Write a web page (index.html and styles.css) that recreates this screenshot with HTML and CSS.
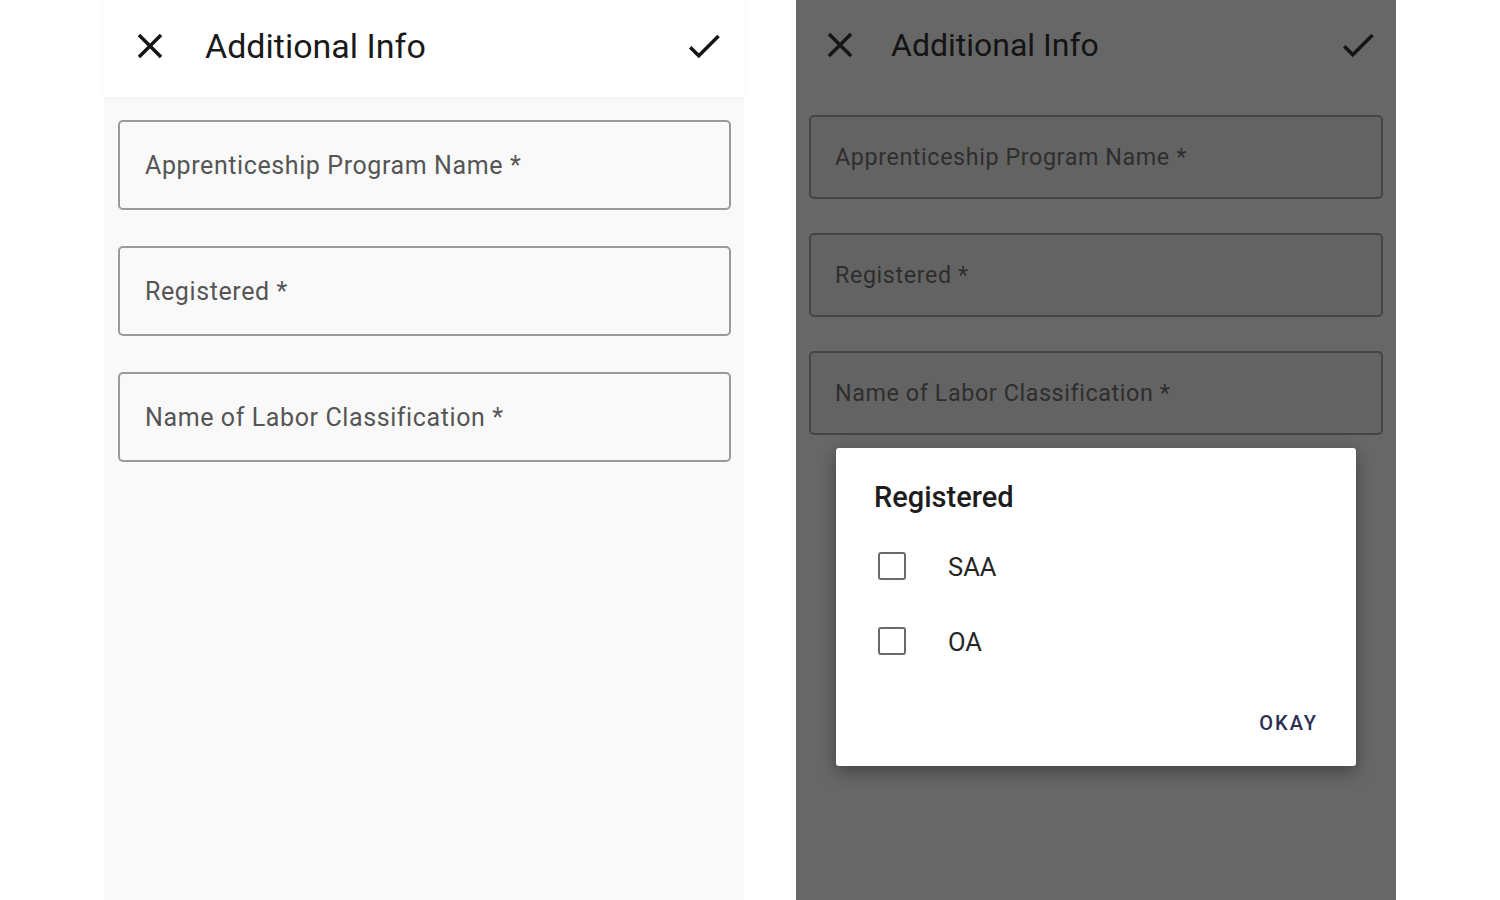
FILE: index.html
```html
<!DOCTYPE html>
<html>
<head>
<meta charset="utf-8">
<link rel="stylesheet" href="styles.css">
</head>
<body>
<div class="stage">
  <section class="phone phone-light">
    <header class="bar">
      <svg class="icon icon-close" viewBox="0 0 24 24"><path d="M19 6.41L17.59 5 12 10.59 6.41 5 5 6.41 10.59 12 5 17.59 6.41 19 12 13.41 17.59 19 19 17.59 13.41 12z"/></svg>
      <h1 class="title">Additional Info</h1>
      <svg class="icon icon-check" viewBox="0 0 24 24"><path d="M9 16.17L4.83 12l-1.42 1.41L9 19 21 7l-1.41-1.41z"/></svg>
    </header>
    <div class="form">
      <div class="field"><span class="label">Apprenticeship Program Name *</span></div>
      <div class="field"><span class="label">Registered *</span></div>
      <div class="field"><span class="label">Name of Labor Classification *</span></div>
    </div>
  </section>

  <section class="phone phone-dim">
    <header class="bar">
      <svg class="icon icon-close" viewBox="0 0 24 24"><path d="M19 6.41L17.59 5 12 10.59 6.41 5 5 6.41 10.59 12 5 17.59 6.41 19 12 13.41 17.59 19 19 17.59 13.41 12z"/></svg>
      <h1 class="title">Additional Info</h1>
      <svg class="icon icon-check" viewBox="0 0 24 24"><path d="M9 16.17L4.83 12l-1.42 1.41L9 19 21 7l-1.41-1.41z"/></svg>
    </header>
    <div class="form">
      <div class="field"><span class="label">Apprenticeship Program Name *</span></div>
      <div class="field"><span class="label">Registered *</span></div>
      <div class="field"><span class="label">Name of Labor Classification *</span></div>
    </div>
    <div class="dialog">
      <h2 class="dialog-title">Registered</h2>
      <div class="options">
        <label class="option"><span class="box"></span><span class="opt-text">SAA</span></label>
        <label class="option"><span class="box"></span><span class="opt-text">OA</span></label>
      </div>
      <div class="actions"><span class="okay">OKAY</span></div>
    </div>
  </section>
</div>
</body>
</html>
```

FILE: styles.css
```css
* { box-sizing: border-box; }
html, body { margin: 0; padding: 0; background: #ffffff; }
body { font-family: Roboto, "Liberation Sans", sans-serif; width: 1500px; height: 900px; overflow: hidden; }

.stage {
  display: flex;
  gap: 52px;
  padding-left: 104px;
  height: 900px;
}

.phone {
  position: relative;
  display: flex;
  flex-direction: column;
  height: 900px;
}
.phone-light { width: 640px; background: #f9f9f9; }
.phone-dim { width: 600px; background: #676767; }

.bar {
  display: flex;
  align-items: center;
  flex: none;
}
.phone-light .bar {
  height: 97px;
  background: #ffffff;
  padding: 0 19px 6px 25px;
  box-shadow: 0 2px 6px rgba(0,0,0,0.03);
}
.phone-dim .bar {
  height: 92px;
  padding: 0 17px 2px 23px;
}

.icon { width: 42px; height: 42px; flex: none; }
.phone-light .icon { fill: #151515; }
.phone-dim .icon { fill: #151515; }

.title {
  margin: 0;
  flex: 1;
  font-weight: 400;
  color: #1a1a1a;
  white-space: nowrap;
}
.phone-light .title { font-size: 34px; padding-left: 34px; }
.phone-dim .title { font-size: 32px; padding-left: 30px; color: #141414; }

.form {
  display: flex;
  flex-direction: column;
}
.phone-light .form { padding: 23px 13px 0 14px; gap: 36px; }
.phone-dim .form { padding: 23px 13px 0 13px; gap: 34px; }

.field {
  display: flex;
  align-items: center;
  border-radius: 5px;
}
.phone-light .field {
  height: 90px;
  border: 2px solid #9a9a9a;
  padding-left: 25px;
}
.phone-dim .field {
  height: 84px;
  border: 2px solid #454545;
  background: #636363;
  padding-left: 24px;
}

.label { white-space: nowrap; letter-spacing: 0.6px; }
.phone-light .label { font-size: 25px; color: #555555; }
.phone-dim .label { font-size: 23.3px; color: #2e2e2e; }

.dialog {
  position: absolute;
  left: 40px;
  top: 448px;
  width: 520px;
  height: 318px;
  background: #ffffff;
  border-radius: 3px;
  box-shadow: 0 6px 18px rgba(0,0,0,0.35);
  padding: 32px 38px 0 38px;
  display: flex;
  flex-direction: column;
}
.dialog-title {
  margin: 0;
  font-size: 29px;
  font-weight: 500;
  color: #1d1d1d;
  line-height: 34px;
}
.options {
  display: flex;
  flex-direction: column;
  gap: 35px;
  margin-top: 33px;
  padding-left: 4px;
}
.option {
  display: flex;
  align-items: center;
  height: 40px;
}
.box {
  width: 28px;
  height: 28px;
  border: 2.5px solid #6a6a6a;
  border-radius: 3px;
  flex: none;
  margin-top: -2px;
}
.opt-text {
  margin-left: 42px;
  font-size: 25.5px;
  color: #262626;
}
.actions {
  display: flex;
  justify-content: flex-end;
  margin-top: 49px;
}
.okay {
  font-size: 20px;
  font-weight: 500;
  letter-spacing: 2px;
  color: #2c2f52;
}
```
